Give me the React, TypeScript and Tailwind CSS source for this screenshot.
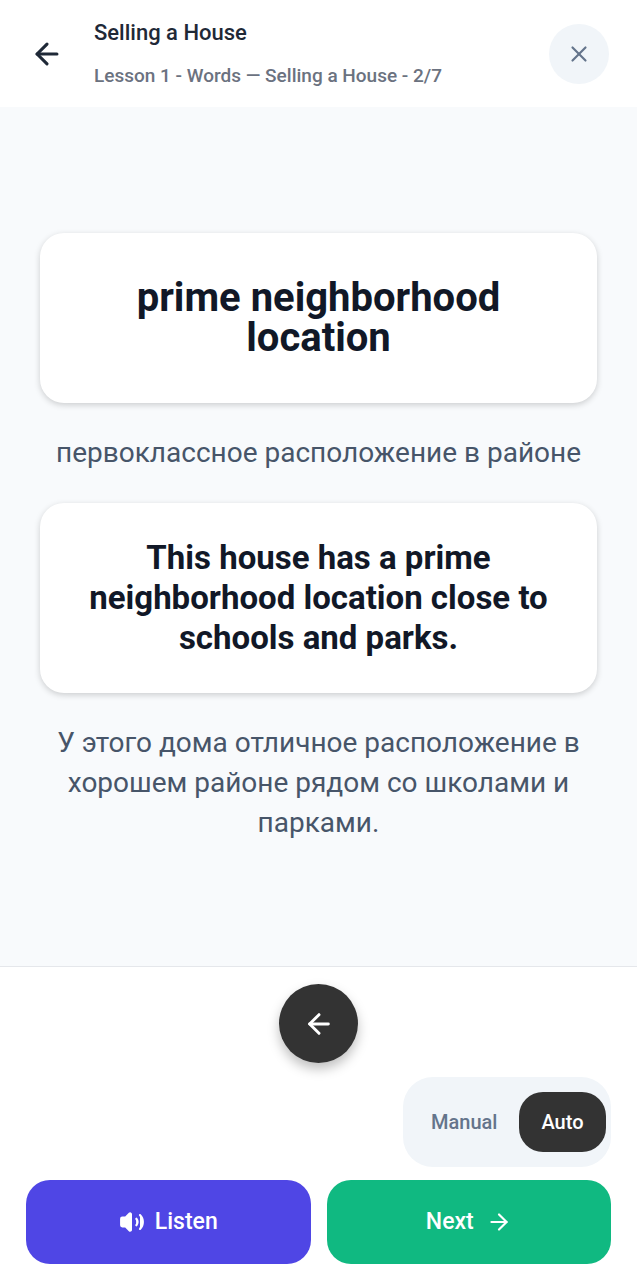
import { ArrowLeft, ArrowRight, Volume2, X } from 'lucide-react';

export default function App() {
  return (
    <div className="flex h-[1280px] w-[637px] flex-col overflow-hidden bg-white font-['Roboto',sans-serif]">
      {/* Header */}
      <div className="flex h-[107px] shrink-0 items-center pl-[30px] pr-[28px]">
        <ArrowLeft size={34} strokeWidth={2.2} className="mr-[30px] mt-[1px] shrink-0 text-[#1f2937]" />
        <div className="flex-1">
          <div className="mb-[15px] text-[22px] font-medium leading-[30px] text-[#1f2937]">Selling a House</div>
          <div className="text-[19px] font-medium leading-[26px] text-[#6b7280]">
            Lesson 1 - Words — Selling a House - 2/7
          </div>
        </div>
        <button className="flex h-[60px] w-[60px] items-center justify-center rounded-full bg-[#f1f5f9]">
          <X size={26} strokeWidth={2} className="text-[#64748b]" />
        </button>
      </div>

      {/* Cards */}
      <div className="flex flex-1 flex-col bg-[#f8fafc] px-[40px] pt-[126px] text-center">
        <div className="flex h-[170px] items-center justify-center rounded-[24px] bg-white px-[24px] shadow-[0_2px_6px_rgba(0,0,0,0.18)]">
          <h1 className="text-[40px] font-bold leading-[40px] text-[#111827]">prime neighborhood location</h1>
        </div>
        <p className="mx-[-8px] mt-[30px] text-[28px] leading-[40px] text-[#475569]">первоклассное расположение в районе</p>
        <div className="mt-[30px] flex h-[190px] items-center justify-center rounded-[24px] bg-white px-[24px] shadow-[0_2px_6px_rgba(0,0,0,0.18)]">
          <p className="text-[33px] font-bold leading-[40px] text-[#111827]">
            This house has a prime neighborhood location close to schools and parks.
          </p>
        </div>
        <p className="mt-[30px] text-[28px] leading-[40px] text-[#475569]">
          У этого дома отличное расположение в хорошем районе рядом со школами и парками.
        </p>
      </div>

      {/* Bottom controls */}
      <div className="flex h-[314px] shrink-0 flex-col border-t border-[#e5e7eb] bg-white px-[26px] pt-[17px]">
        <button className="flex h-[79px] w-[79px] items-center justify-center self-center rounded-full bg-[#333333] shadow-[0_6px_12px_rgba(0,0,0,0.25)]">
          <ArrowLeft size={32} strokeWidth={2.2} className="text-white" />
        </button>
        <div className="mt-[14px] flex h-[90px] w-[208px] items-center self-end rounded-[30px] bg-[#f1f5f9] pl-[28px] pr-[5px]">
          <span className="flex-1 text-[20px] font-medium text-[#64748b]">Manual</span>
          <span className="flex h-[60px] w-[87px] items-center justify-center rounded-[24px] bg-[#333333] text-[20px] font-medium text-white">
            Auto
          </span>
        </div>
        <div className="mt-[13px] flex gap-[16px]">
          <button className="flex h-[84px] flex-1 items-center justify-center gap-[10px] rounded-[24px] bg-[#4f46e5] text-[23px] font-medium text-white">
            <Volume2 size={26} fill="currentColor" />
            Listen
          </button>
          <button className="flex h-[84px] flex-1 items-center justify-center gap-[12px] rounded-[24px] bg-[#10b981] text-[23px] font-medium text-white">
            Next
            <ArrowRight size={26} />
          </button>
        </div>
      </div>
    </div>
  );
}
